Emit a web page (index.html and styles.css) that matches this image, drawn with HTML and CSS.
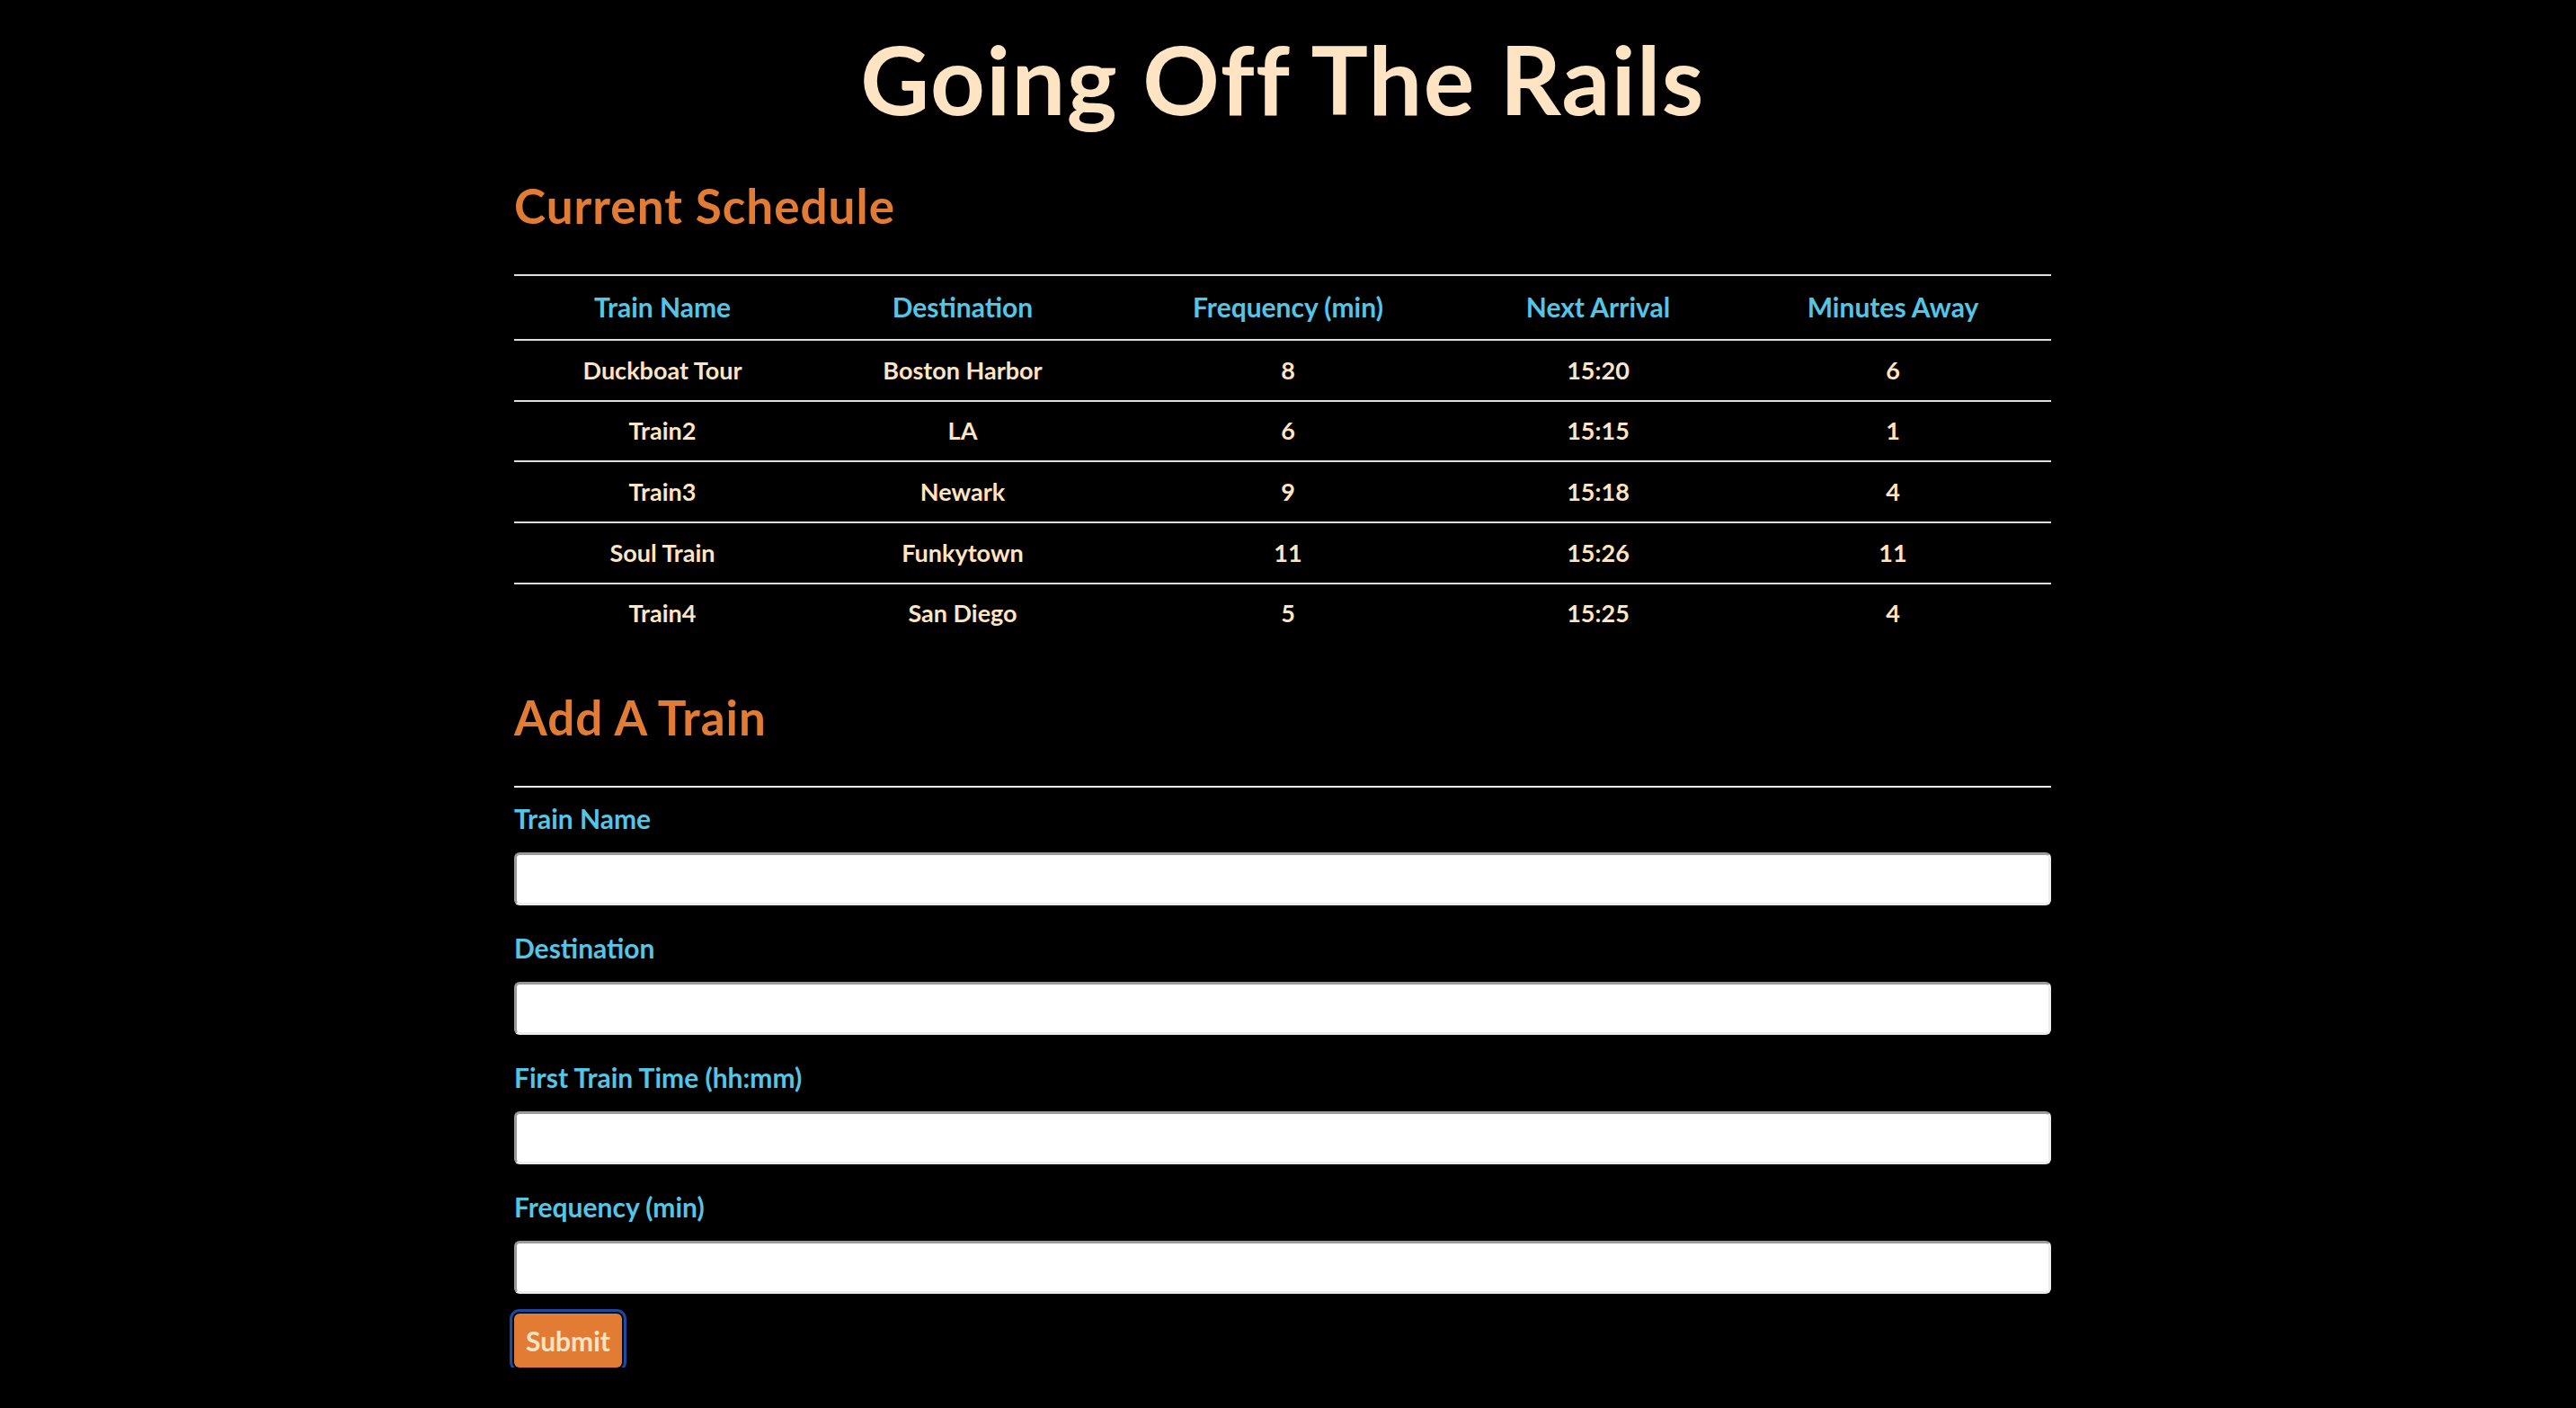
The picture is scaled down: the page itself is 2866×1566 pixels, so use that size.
FILE: index.html
```html
<!DOCTYPE html>
<html lang="en">
<head>
<meta charset="utf-8">
<title>Going Off The Rails</title>
<link rel="stylesheet" href="styles.css">
</head>
<body>
<div class="container">
  <h1 class="title">Going Off The Rails</h1>

  <h2 class="section-title">Current Schedule</h2>
  <table class="schedule">
    <colgroup>
      <col class="c-name">
      <col class="c-dest">
      <col class="c-freq">
      <col class="c-next">
      <col class="c-away">
    </colgroup>
    <thead>
      <tr>
        <th>Train Name</th>
        <th>Destination</th>
        <th>Frequency (min)</th>
        <th>Next Arrival</th>
        <th>Minutes Away</th>
      </tr>
    </thead>
    <tbody>
      <tr><td>Duckboat Tour</td><td>Boston Harbor</td><td>8</td><td>15:20</td><td>6</td></tr>
      <tr><td>Train2</td><td>LA</td><td>6</td><td>15:15</td><td>1</td></tr>
      <tr><td>Train3</td><td>Newark</td><td>9</td><td>15:18</td><td>4</td></tr>
      <tr><td>Soul Train</td><td>Funkytown</td><td>11</td><td>15:26</td><td>11</td></tr>
      <tr><td>Train4</td><td>San Diego</td><td>5</td><td>15:25</td><td>4</td></tr>
    </tbody>
  </table>

  <h2 class="section-title add-title">Add A Train</h2>
  <hr class="divider">
  <form class="train-form">
    <div class="form-group">
      <label for="train-name">Train Name</label>
      <input id="train-name" type="text">
    </div>
    <div class="form-group">
      <label for="destination">Destination</label>
      <input id="destination" type="text">
    </div>
    <div class="form-group">
      <label for="first-time">First Train Time (hh:mm)</label>
      <input id="first-time" type="text">
    </div>
    <div class="form-group last">
      <label for="frequency">Frequency (min)</label>
      <input id="frequency" type="text">
    </div>
    <button type="button" class="submit-btn">Submit</button>
  </form>
</div>
</body>
</html>
```

FILE: styles.css
```css
html, body {
  margin: 0;
  padding: 0;
  background: #000;
}

body {
  padding-right: 12px;
  font-family: "Lato", "Open Sans", "Liberation Sans", sans-serif;
  font-weight: 700;
  color: #ffe4c4;
}

.container {
  width: 1710px;
  margin: 0 auto;
}

.title {
  margin: 23px 0 0;
  font-size: 106px;
  line-height: 128px;
  font-weight: 700;
  letter-spacing: 1.4px;
  text-align: center;
  color: #ffe4c4;
}

.section-title {
  margin: 46px 0 0;
  font-size: 53px;
  line-height: 64px;
  font-weight: 700;
  letter-spacing: 1px;
  color: #e27b33;
}

.add-title {
  margin-top: 51px;
}

.schedule {
  width: 100%;
  margin-top: 44px;
  border-collapse: collapse;
  table-layout: fixed;
  border-top: 2px solid #dddddd;
}

.c-name { width: 330px; }
.c-dest { width: 338px; }
.c-freq { width: 386px; }
.c-next { width: 304px; }
.c-away { width: 352px; }

.schedule th {
  padding: 16px 0 18px;
  font-size: 30px;
  line-height: 36px;
  font-weight: 700;
  color: #55c5e6;
  text-align: center;
  border-bottom: 2px solid #dddddd;
}

.schedule td {
  padding: 16.5px 0 17.2px;
  font-size: 27px;
  line-height: 32px;
  font-weight: 700;
  color: #ffe4c4;
  text-align: center;
  border-top: 2px solid #dddddd;
}

.schedule tbody tr:first-child td {
  border-top: none;
}

.divider {
  margin: 44px 0 0;
  height: 0;
  border: none;
  border-top: 2px solid #eeeeee;
}

.train-form {
  display: flex;
  flex-direction: column;
  align-items: flex-start;
  padding-top: 16px;
}

.form-group {
  display: flex;
  flex-direction: column;
  width: 100%;
  margin-bottom: 29px;
}

.form-group.last {
  margin-bottom: 22px;
}

.form-group label {
  font-size: 30px;
  line-height: 36px;
  font-weight: 700;
  color: #55c5e6;
  margin-bottom: 20px;
}

.form-group input {
  box-sizing: border-box;
  width: 100%;
  height: 59px;
  margin: 0;
  padding: 0 12px;
  background: #ffffff;
  border-style: solid;
  border-width: 3px;
  border-color: #9a9a9a #ececec #ececec #9a9a9a;
  border-radius: 6px;
  font-size: 27px;
  outline: none;
}

.submit-btn {
  box-sizing: border-box;
  width: 120px;
  height: 60px;
  margin: 0;
  padding: 0;
  background: #e27b33;
  color: #ffe4c4;
  border: none;
  border-radius: 6px;
  font-family: "Lato", "Open Sans", "Liberation Sans", sans-serif;
  font-size: 30px;
  font-weight: 700;
  box-shadow: 0 0 0 2px #050a1a, 0 0 0 5px #1d4a9c;
}
```
